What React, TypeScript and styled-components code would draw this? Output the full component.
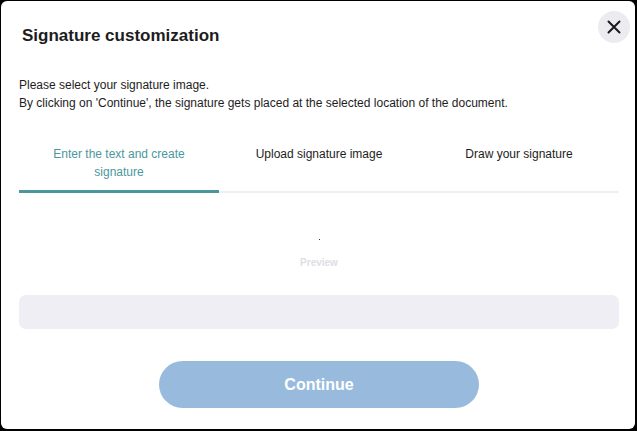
import React, { useState } from "react";
import styled, { createGlobalStyle } from "styled-components";

const colours = {
    frame: "#000000",
    surface: "#ffffff",
    text: "#1d1d1d",
    teal: "#4b979d",
    track: "#f0f0f4",
    field: "#efeef4",
    button: "#98bbdd",
    muted: "#dedee4"
};

const GlobalStyle = createGlobalStyle`
  html, body {
    margin: 0;
    padding: 0;
    background: ${colours.frame};
  }
  body {
    font-family: "Liberation Sans", Arial, sans-serif;
  }
`;

const Frame =
  styled.div`
  width: 637px;
  height: 431px;
  box-sizing: border-box;
  padding: 1px 2px 2px 1px;
  `;

const Dialog =
  styled.div`
  height: 100%;
  box-sizing: border-box;
  background: ${colours.surface};
  border-radius: 6px;
  padding: 0 16px 0 18px;
  display: flex;
  flex-direction: column;
  `;

const Header =
  styled.div`
  display: flex;
  align-items: flex-start;
  justify-content: space-between;
  padding-top: 10px;
  `;

const Title =
  styled.h1`
  margin: 15px 0 0 3px;
  font-size: 17px;
  font-weight: bold;
  color: ${colours.text};
  `;

const CloseButton =
  styled.button`
  width: 32px;
  height: 32px;
  border: none;
  border-radius: 50%;
  background: #ebebf0;
  display: flex;
  align-items: center;
  justify-content: center;
  padding: 0;
  margin-right: -11px;
  cursor: pointer;
  `;

const Intro =
  styled.p`
  margin: 30px 0 0 0;
  font-size: 12px;
  line-height: 18px;
  color: ${colours.text};
  `;

const TabBar =
  styled.div`
  display: grid;
  grid-template-columns: repeat(3, 1fr);
  margin-top: 33px;
  width: 600px;
  `;

interface TabProps {
  active: boolean
}

const Tab =
  styled.button<TabProps>`
  border: none;
  background: none;
  font-family: inherit;
  font-size: 12px;
  line-height: 18px;
  padding: 0 26px;
  height: 48px;
  box-sizing: border-box;
  display: flex;
  justify-content: center;
  align-items: flex-start;
  text-align: center;
  cursor: pointer;
  color: ${props => props.active ? colours.teal : colours.text};
  border-bottom: ${props => props.active
        ? `3px solid ${colours.teal}`
        : `2px solid ${colours.track}`};
  margin-bottom: ${props => props.active ? "0" : "1px"};
  `;

const PreviewArea =
  styled.div`
  height: 101px;
  display: flex;
  flex-direction: column;
  align-items: center;
  padding-top: 45px;
  box-sizing: border-box;
  width: 600px;
  `;

const Dot =
  styled.span`
  width: 1px;
  height: 1px;
  background: #333;
  `;

const PreviewLabel =
  styled.span`
  margin-top: 17px;
  font-size: 10px;
  font-weight: bold;
  color: ${colours.muted};
  `;

const TextField =
  styled.input`
  width: 600px;
  height: 34px;
  box-sizing: border-box;
  border: none;
  border-radius: 7px;
  background: ${colours.field};
  outline: none;
  padding: 0 12px;
  font-family: inherit;
  font-size: 13px;
  `;

const Footer =
  styled.div`
  width: 600px;
  display: flex;
  justify-content: center;
  margin-top: 32px;
  `;

const ContinueButton =
  styled.button`
  width: 320px;
  height: 47px;
  border: none;
  border-radius: 24px;
  background: ${colours.button};
  color: #ffffff;
  font-family: inherit;
  font-size: 16px;
  font-weight: bold;
  cursor: pointer;
  `;

const tabs = [
    "Enter the text and create signature",
    "Upload signature image",
    "Draw your signature"
];

const App =
  () => {
      const [active, setActive] = useState(0);
      const [text, setText] = useState("");

      return (
          <Frame>
              <GlobalStyle/>
              <Dialog>
                  <Header>
                      <Title>Signature customization</Title>
                      <CloseButton aria-label="Close">
                          <svg width="16" height="16" viewBox="0 0 16 16">
                              <path d="M2.5 2.5 L13.5 13.5 M13.5 2.5 L2.5 13.5"
                                  stroke="#1a1a1a"
                                  strokeWidth="2"
                                  strokeLinecap="round"/>
                          </svg>
                      </CloseButton>
                  </Header>
                  <Intro>
                      Please select your signature image.<br/>
                      By clicking on 'Continue', the signature gets placed at the selected location of the document.
                  </Intro>
                  <TabBar>
                      {tabs.map((label, i) =>
                          <Tab
                              key={label}
                              active={i === active}
                              onClick={() => setActive(i)}>
                              {label}
                          </Tab>
                      )}
                  </TabBar>
                  <PreviewArea>
                      <Dot/>
                      <PreviewLabel>Preview</PreviewLabel>
                  </PreviewArea>
                  <TextField
                      value={text}
                      onChange={e => setText(e.target.value)}/>
                  <Footer>
                      <ContinueButton>Continue</ContinueButton>
                  </Footer>
              </Dialog>
          </Frame>
      );
  };

export default App;
